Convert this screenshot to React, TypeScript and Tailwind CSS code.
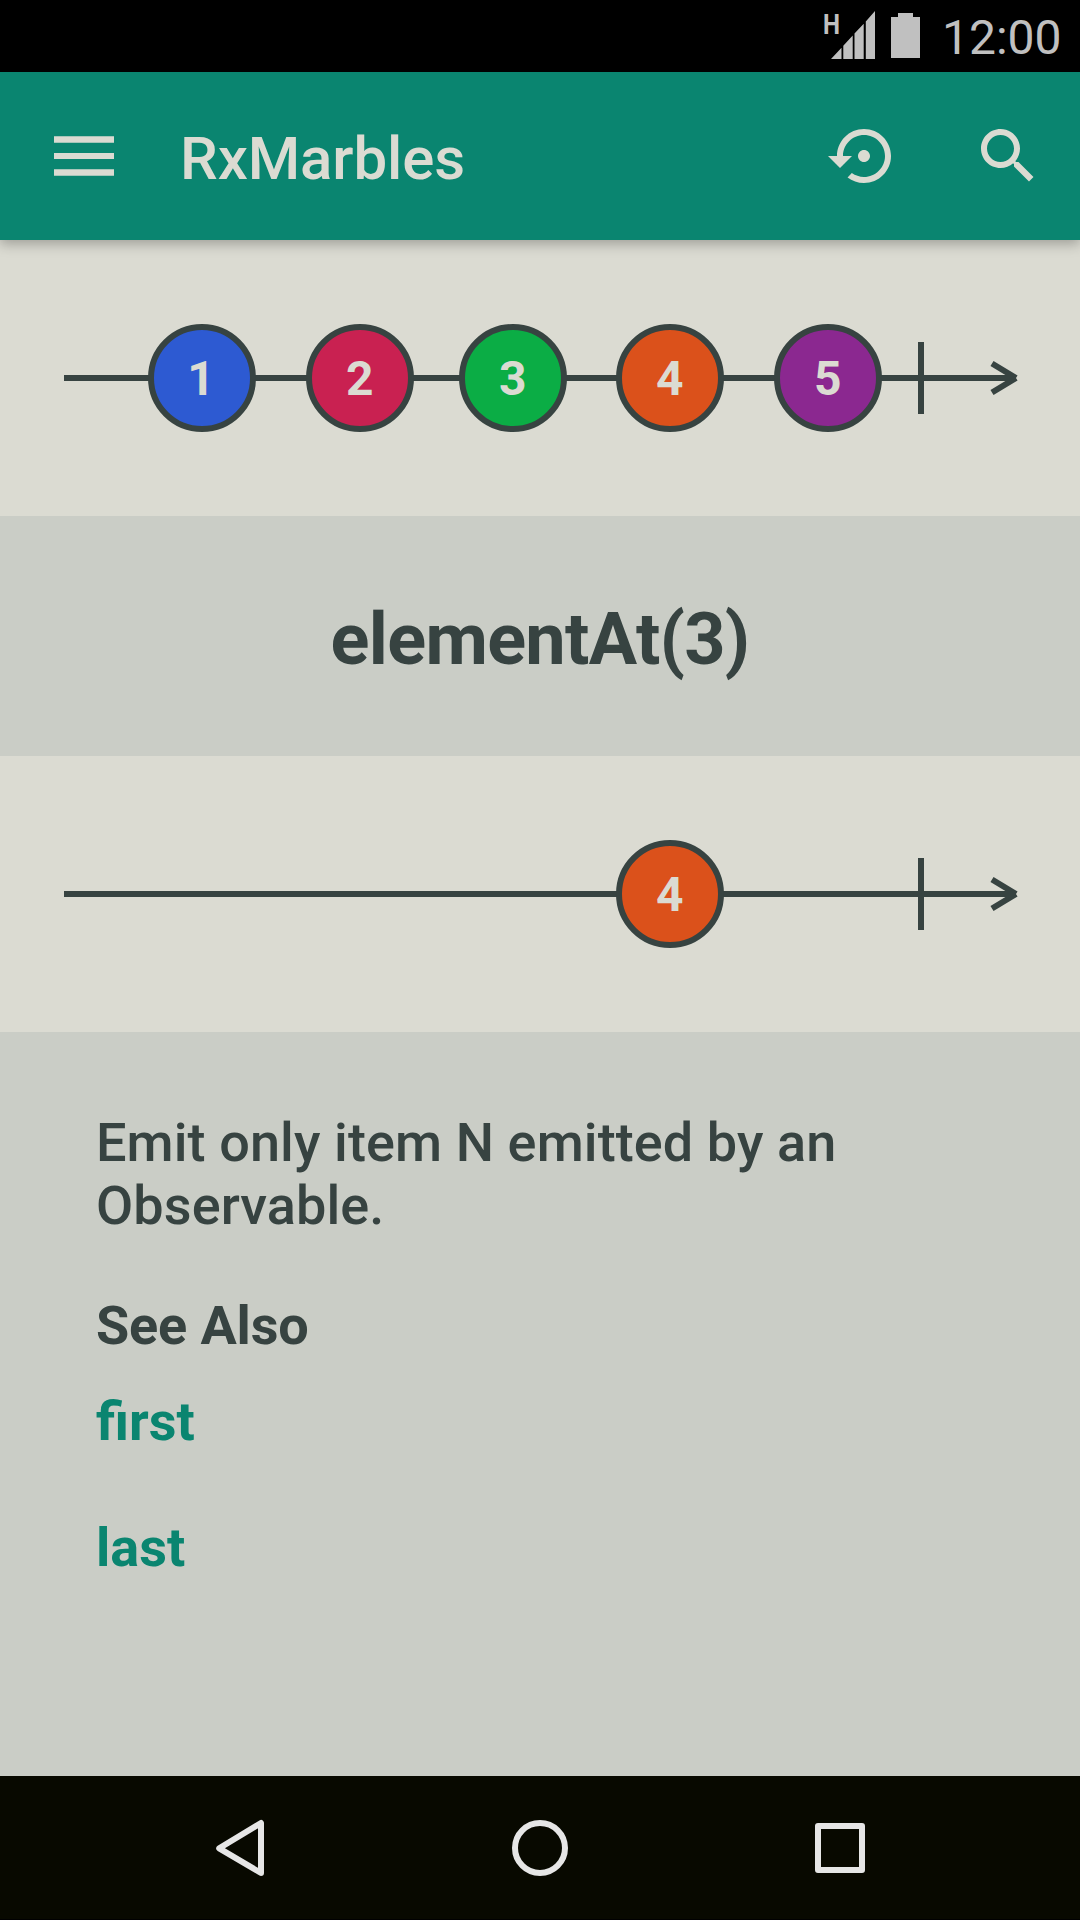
import React from 'react';

const marbles = [
  { n: '1', x: 202, c: '#2d5ad2' },
  { n: '2', x: 360, c: '#c92151' },
  { n: '3', x: 513, c: '#0bad45' },
  { n: '4', x: 670, c: '#db511b' },
  { n: '5', x: 828, c: '#8b2890' },
];

function Timeline({ items }: { items: typeof marbles }) {
  return (
    <section className="h-[276px] shrink-0 bg-[#dbdbd2]">
      <svg width="1080" height="276" viewBox="0 0 1080 276" fill="none" stroke="#374341" strokeWidth="6">
        <path d="M64 138H1016M921 102v72M992 123.500L1016 138M992 152.500L1016 138" />
        {items.map((m) => (
          <g key={m.n}>
            <circle cx={m.x} cy="138" r="51" fill={m.c} />
            <text x={m.n === '1' ? m.x - 1 : m.x - 0.3} y="155" textAnchor="middle" fontSize="48" fontWeight="700" fill="#dbdbd2" stroke="none">
              {m.n}
            </text>
          </g>
        ))}
      </svg>
    </section>
  );
}

function StatusBar() {
  return (
    <div className="flex h-[72px] shrink-0 items-center justify-end bg-black pr-[19px] text-[#c0c0c0]">
      <div className="flex grow justify-end pr-3">
        <svg width="110" height="72" viewBox="820 0 110 72" fill="currentColor">
          <text x="823" y="34" fontSize="28" fontWeight="700" textLength="17" lengthAdjust="spacingAndGlyphs">H</text>
          <path d="M831 59L841.500 47.700V59ZM843.300 59V45.700L852.700 35.600V59ZM854.500 59V33.500L863.700 23.700V59ZM865.800 59V21.500L875 11V59Z" />
          <path d="M891 17h7v-4h15v4h7v41h-29z" />
        </svg>
      </div>
      <span className="w-[119px] whitespace-nowrap pt-[3px] text-right text-[48px] leading-[72px]">12:00</span>
    </div>
  );
}

function Header() {
  return (
    <header className="relative flex h-[168px] shrink-0 items-center bg-[#0a8570] pl-[54px] pr-9 text-[#dbdbd2] shadow-[0_4px_12px_rgba(0,0,0,0.28)]">
      <svg width="60" height="40" viewBox="0 0 60 40" fill="currentColor">
        <path d="M0 .3h60v6.400H0zM0 17h60v6H0zM0 33.300h60v6.400H0z" />
      </svg>
      <h1 className="ml-[66px] pt-[5px] text-[60px] font-medium leading-[70px] tracking-[-0.1px]">RxMarbles</h1>
      <div className="ml-auto flex gap-[72px]">
        <svg width="72" height="72" viewBox="0 0 24 24" fill="currentColor">
          <path d="M14 12c0-1.100-.9-2-2-2s-2 .9-2 2 .9 2 2 2 2-.9 2-2zm-2-9c-4.970 0-9 4.030-9 9H0l4 4 4-4H5c0-3.870 3.130-7 7-7s7 3.130 7 7-3.130 7-7 7c-1.510 0-2.910-.49-4.060-1.300l-1.420 1.440C8.040 20.300 9.940 21 12 21c4.970 0 9-4.030 9-9s-4.030-9-9-9z" />
        </svg>
        <svg width="72" height="72" viewBox="0 0 24 24" fill="currentColor">
          <path d="M15.500 14h-.79l-.28-.27C15.410 12.590 16 11.110 16 9.500 16 5.910 13.090 3 9.500 3S3 5.910 3 9.500 5.910 16 9.500 16c1.610 0 3.090-.59 4.230-1.570l.27.28v.79l5 4.990L20.490 19l-4.990-5zm-6 0C7.010 14 5 11.990 5 9.500S7.010 5 9.500 5 14 7.010 14 9.500 11.990 14 9.500 14z" />
        </svg>
      </div>
    </header>
  );
}

function NavBar() {
  return (
    <nav className="flex h-36 shrink-0 items-center justify-center gap-[228px] border-b border-black bg-[#080900] pt-px">
      <svg width="72" height="72" viewBox="0 0 72 72" fill="none" stroke="#e6e6e6" strokeWidth="6" strokeLinejoin="round">
        <path d="M57 11V61L15.200 36.300Z" />
      </svg>
      <svg width="72" height="72" viewBox="0 0 72 72" fill="none" stroke="#e6e6e6" strokeWidth="6">
        <circle cx="36" cy="36" r="25" />
      </svg>
      <svg width="72" height="72" viewBox="0 0 72 72" fill="none" stroke="#e6e6e6" strokeWidth="6" strokeLinejoin="round">
        <rect x="14" y="14" width="44" height="44" />
      </svg>
    </nav>
  );
}

export default function App() {
  return (
    <div className="flex h-[1920px] w-[1080px] flex-col overflow-hidden bg-[#cacdc6] font-['Roboto',sans-serif] text-[#374341]">
      <StatusBar />
      <Header />
      <Timeline items={marbles} />
      <div className="flex h-[240px] shrink-0 items-center justify-center pt-[7px] text-[72px] font-bold leading-[84px] tracking-[-0.65px]">
        elementAt(3)
      </div>
      <Timeline items={[marbles[3]]} />
      <main className="flex grow flex-col px-24 pt-[79px] text-[54px] leading-[63px]">
        <p className="font-medium tracking-[0.1px]">
          Emit only item N emitted by an
          <br />
          Observable.
        </p>
        <h2 className="mt-[57px] font-bold tracking-[-0.15px]">See Also</h2>
        <a className="mt-[33px] font-bold text-[#0a8570]">first</a>
        <a className="mt-[63px] font-bold text-[#0a8570]">last</a>
      </main>
      <NavBar />
    </div>
  );
}
